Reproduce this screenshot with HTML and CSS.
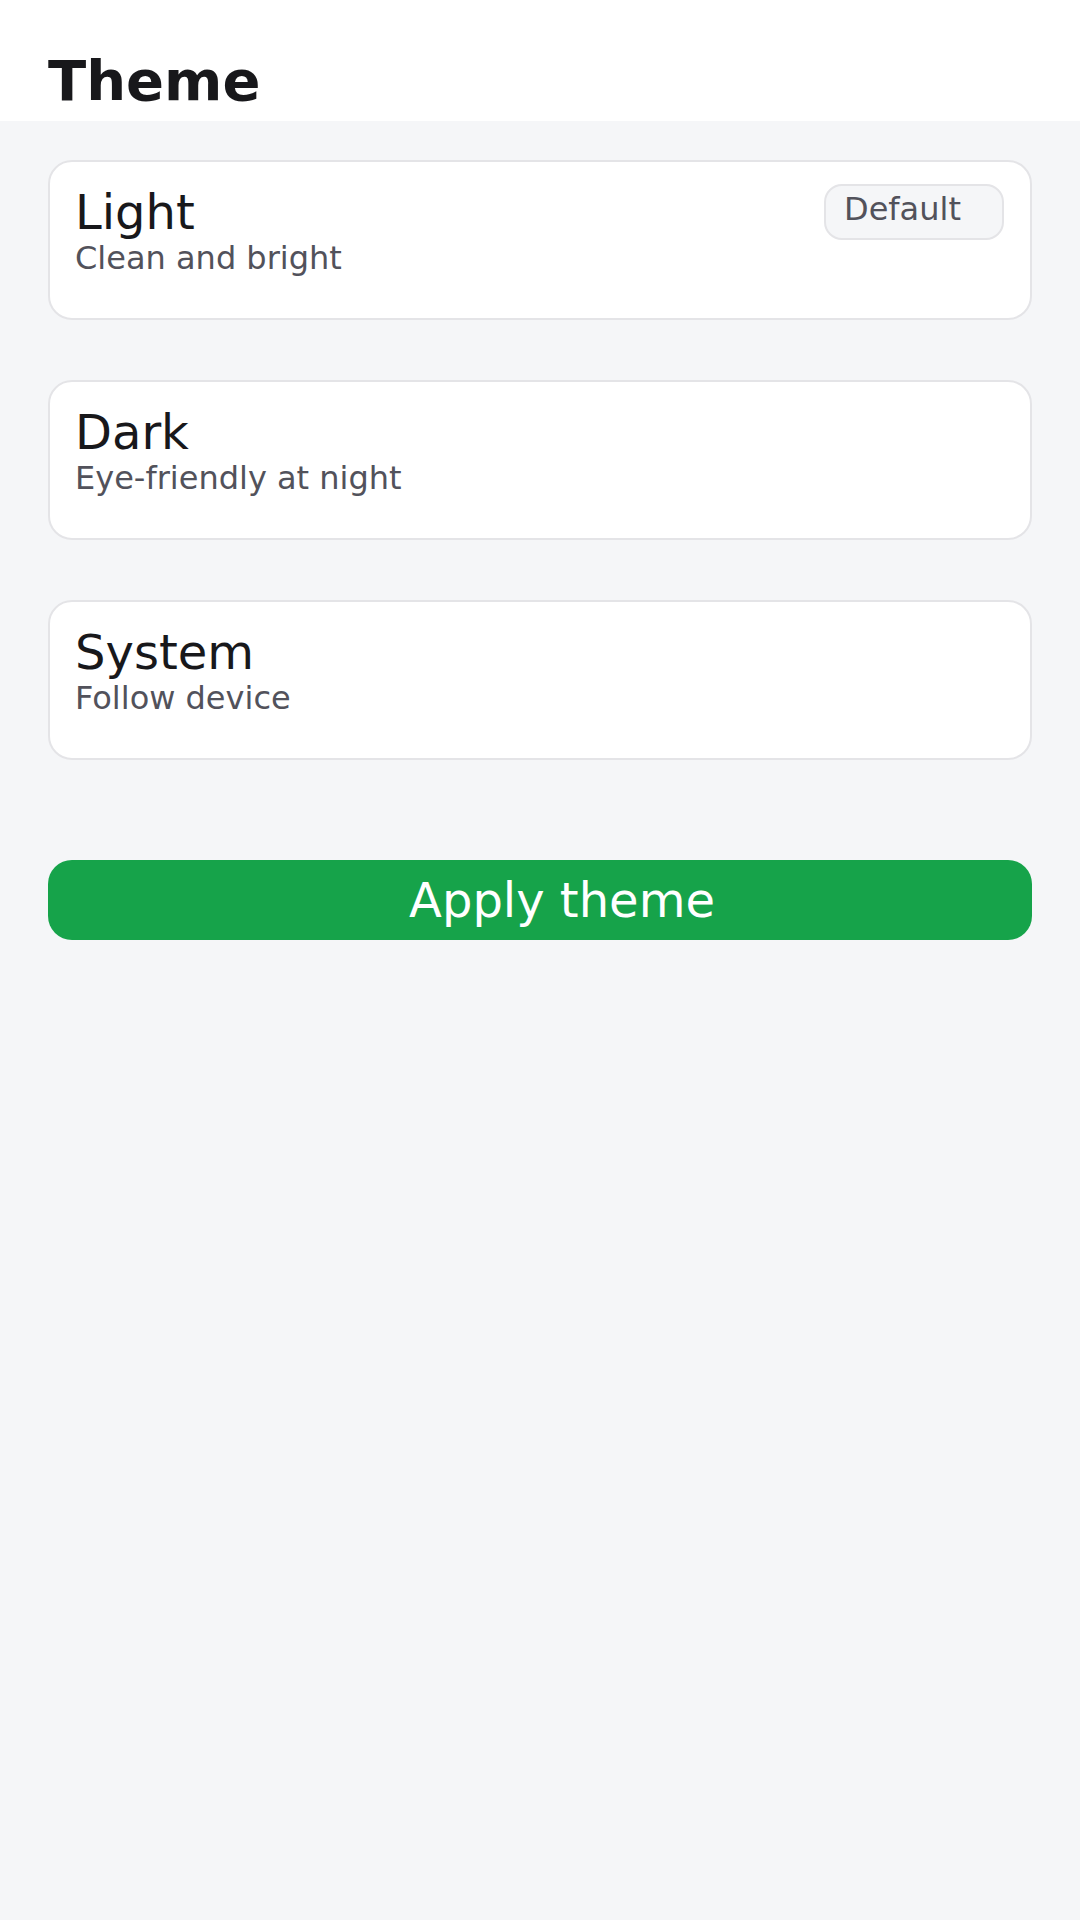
FILE: index.html
```html
<!DOCTYPE html>
<html lang="en">
<head>
<meta charset="utf-8">
<title>Theme</title>
<link rel="stylesheet" href="styles.css">
</head>
<body>
  <header class="topbar">
    <h1 class="title">Theme</h1>
  </header>
  <main class="content">
    <div class="options">
      <div class="card">
        <div class="card-text">
          <div class="card-title">Light</div>
          <div class="card-sub">Clean and bright</div>
        </div>
        <span class="badge">Default</span>
      </div>
      <div class="card">
        <div class="card-text">
          <div class="card-title">Dark</div>
          <div class="card-sub">Eye-friendly at night</div>
        </div>
      </div>
      <div class="card">
        <div class="card-text">
          <div class="card-title">System</div>
          <div class="card-sub">Follow device</div>
        </div>
      </div>
    </div>
    <button class="apply" type="button">Apply theme</button>
  </main>
</body>
</html>
```
FILE: styles.css
```css
* { box-sizing: border-box; }
html, body {
  margin: 0;
  padding: 0;
}
body {
  background: #f5f6f8;
  font-family: "DejaVu Sans", sans-serif;
  color: #18181b;
  width: 1080px;
  min-height: 1920px;
}
.topbar {
  background: #ffffff;
  height: 121px;
  padding: 48px 48px 0;
}
.title {
  margin: 0;
  font-size: 56px;
  font-weight: 700;
  line-height: 65px;
  color: #18181b;
}
.content {
  padding: 39px 48px 0;
  display: flex;
  flex-direction: column;
}
.options {
  display: flex;
  flex-direction: column;
  gap: 60px;
}
.card {
  height: 160px;
  background: #ffffff;
  border: 2px solid #e4e4e7;
  border-radius: 24px;
  padding: 22px 26px 22px 25px;
  display: flex;
  justify-content: space-between;
  align-items: flex-start;
}
.card-title {
  font-size: 48px;
  line-height: 56px;
  color: #18181b;
}
.card-sub {
  font-size: 32px;
  line-height: 37px;
  color: #52525b;
}
.badge {
  width: 180px;
  height: 56px;
  padding: 5px 18px 0;
  border: 2px solid #e4e4e7;
  border-radius: 18px;
  background: #f5f6f8;
  font-size: 32px;
  line-height: 37px;
  color: #52525b;
}
.apply {
  margin-top: 100px;
  height: 80px;
  border: none;
  border-radius: 24px;
  background: #16a34a;
  color: #ffffff;
  font-family: "DejaVu Sans", sans-serif;
  font-size: 48px;
  line-height: 56px;
  padding: 0 0 0 44px;
  text-align: center;
}
```
